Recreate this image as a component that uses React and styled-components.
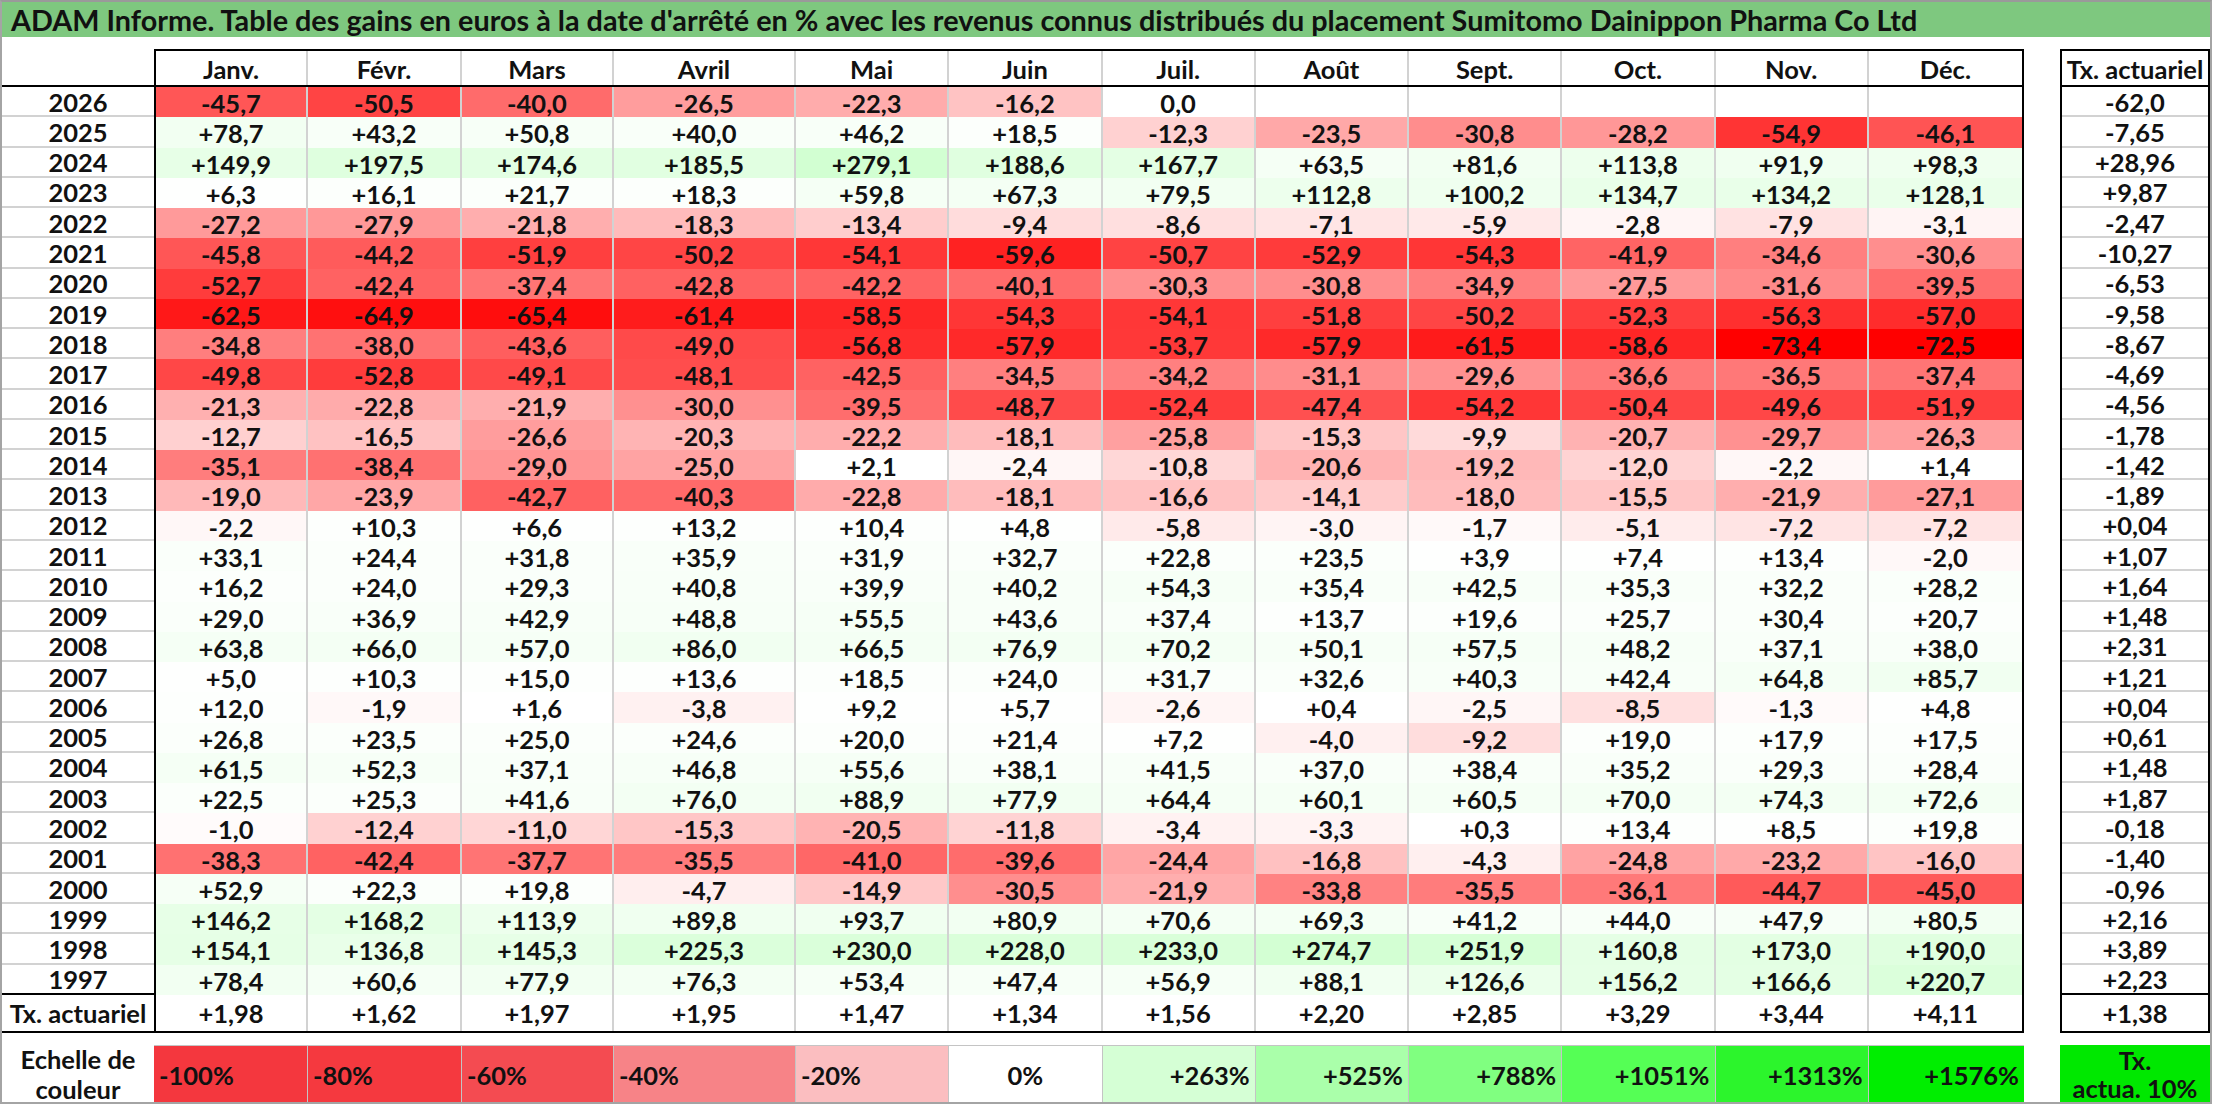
import React from "react";
import styled, { createGlobalStyle } from "styled-components";

const Global = createGlobalStyle`
  html, body { margin: 0; padding: 0; background: #fff; }
  body { font-family: Lato, "Open Sans", "Liberation Sans", sans-serif; color: #111; }
  * { box-sizing: border-box; }
`;

const MONTHS = ["Janv.", "Févr.", "Mars", "Avril", "Mai", "Juin", "Juil.", "Août", "Sept.", "Oct.", "Nov.", "Déc."];
const COLS = "152px 154px 152px 182px repeat(8, 153.25px)";
const LEGEND_COLS = "154px 154px 152px 182px repeat(7, 153.25px) 155.25px";
const ROW_H = 908 / 30;

const DATA = [
  ["2026", ["-45,7", "-50,5", "-40,0", "-26,5", "-22,3", "-16,2", "0,0", "", "", "", "", ""], "-62,0"],
  ["2025", ["+78,7", "+43,2", "+50,8", "+40,0", "+46,2", "+18,5", "-12,3", "-23,5", "-30,8", "-28,2", "-54,9", "-46,1"], "-7,65"],
  ["2024", ["+149,9", "+197,5", "+174,6", "+185,5", "+279,1", "+188,6", "+167,7", "+63,5", "+81,6", "+113,8", "+91,9", "+98,3"], "+28,96"],
  ["2023", ["+6,3", "+16,1", "+21,7", "+18,3", "+59,8", "+67,3", "+79,5", "+112,8", "+100,2", "+134,7", "+134,2", "+128,1"], "+9,87"],
  ["2022", ["-27,2", "-27,9", "-21,8", "-18,3", "-13,4", "-9,4", "-8,6", "-7,1", "-5,9", "-2,8", "-7,9", "-3,1"], "-2,47"],
  ["2021", ["-45,8", "-44,2", "-51,9", "-50,2", "-54,1", "-59,6", "-50,7", "-52,9", "-54,3", "-41,9", "-34,6", "-30,6"], "-10,27"],
  ["2020", ["-52,7", "-42,4", "-37,4", "-42,8", "-42,2", "-40,1", "-30,3", "-30,8", "-34,9", "-27,5", "-31,6", "-39,5"], "-6,53"],
  ["2019", ["-62,5", "-64,9", "-65,4", "-61,4", "-58,5", "-54,3", "-54,1", "-51,8", "-50,2", "-52,3", "-56,3", "-57,0"], "-9,58"],
  ["2018", ["-34,8", "-38,0", "-43,6", "-49,0", "-56,8", "-57,9", "-53,7", "-57,9", "-61,5", "-58,6", "-73,4", "-72,5"], "-8,67"],
  ["2017", ["-49,8", "-52,8", "-49,1", "-48,1", "-42,5", "-34,5", "-34,2", "-31,1", "-29,6", "-36,6", "-36,5", "-37,4"], "-4,69"],
  ["2016", ["-21,3", "-22,8", "-21,9", "-30,0", "-39,5", "-48,7", "-52,4", "-47,4", "-54,2", "-50,4", "-49,6", "-51,9"], "-4,56"],
  ["2015", ["-12,7", "-16,5", "-26,6", "-20,3", "-22,2", "-18,1", "-25,8", "-15,3", "-9,9", "-20,7", "-29,7", "-26,3"], "-1,78"],
  ["2014", ["-35,1", "-38,4", "-29,0", "-25,0", "+2,1", "-2,4", "-10,8", "-20,6", "-19,2", "-12,0", "-2,2", "+1,4"], "-1,42"],
  ["2013", ["-19,0", "-23,9", "-42,7", "-40,3", "-22,8", "-18,1", "-16,6", "-14,1", "-18,0", "-15,5", "-21,9", "-27,1"], "-1,89"],
  ["2012", ["-2,2", "+10,3", "+6,6", "+13,2", "+10,4", "+4,8", "-5,8", "-3,0", "-1,7", "-5,1", "-7,2", "-7,2"], "+0,04"],
  ["2011", ["+33,1", "+24,4", "+31,8", "+35,9", "+31,9", "+32,7", "+22,8", "+23,5", "+3,9", "+7,4", "+13,4", "-2,0"], "+1,07"],
  ["2010", ["+16,2", "+24,0", "+29,3", "+40,8", "+39,9", "+40,2", "+54,3", "+35,4", "+42,5", "+35,3", "+32,2", "+28,2"], "+1,64"],
  ["2009", ["+29,0", "+36,9", "+42,9", "+48,8", "+55,5", "+43,6", "+37,4", "+13,7", "+19,6", "+25,7", "+30,4", "+20,7"], "+1,48"],
  ["2008", ["+63,8", "+66,0", "+57,0", "+86,0", "+66,5", "+76,9", "+70,2", "+50,1", "+57,5", "+48,2", "+37,1", "+38,0"], "+2,31"],
  ["2007", ["+5,0", "+10,3", "+15,0", "+13,6", "+18,5", "+24,0", "+31,7", "+32,6", "+40,3", "+42,4", "+64,8", "+85,7"], "+1,21"],
  ["2006", ["+12,0", "-1,9", "+1,6", "-3,8", "+9,2", "+5,7", "-2,6", "+0,4", "-2,5", "-8,5", "-1,3", "+4,8"], "+0,04"],
  ["2005", ["+26,8", "+23,5", "+25,0", "+24,6", "+20,0", "+21,4", "+7,2", "-4,0", "-9,2", "+19,0", "+17,9", "+17,5"], "+0,61"],
  ["2004", ["+61,5", "+52,3", "+37,1", "+46,8", "+55,6", "+38,1", "+41,5", "+37,0", "+38,4", "+35,2", "+29,3", "+28,4"], "+1,48"],
  ["2003", ["+22,5", "+25,3", "+41,6", "+76,0", "+88,9", "+77,9", "+64,4", "+60,1", "+60,5", "+70,0", "+74,3", "+72,6"], "+1,87"],
  ["2002", ["-1,0", "-12,4", "-11,0", "-15,3", "-20,5", "-11,8", "-3,4", "-3,3", "+0,3", "+13,4", "+8,5", "+19,8"], "-0,18"],
  ["2001", ["-38,3", "-42,4", "-37,7", "-35,5", "-41,0", "-39,6", "-24,4", "-16,8", "-4,3", "-24,8", "-23,2", "-16,0"], "-1,40"],
  ["2000", ["+52,9", "+22,3", "+19,8", "-4,7", "-14,9", "-30,5", "-21,9", "-33,8", "-35,5", "-36,1", "-44,7", "-45,0"], "-0,96"],
  ["1999", ["+146,2", "+168,2", "+113,9", "+89,8", "+93,7", "+80,9", "+70,6", "+69,3", "+41,2", "+44,0", "+47,9", "+80,5"], "+2,16"],
  ["1998", ["+154,1", "+136,8", "+145,3", "+225,3", "+230,0", "+228,0", "+233,0", "+274,7", "+251,9", "+160,8", "+173,0", "+190,0"], "+3,89"],
  ["1997", ["+78,4", "+60,6", "+77,9", "+76,3", "+53,4", "+47,4", "+56,9", "+88,1", "+126,6", "+156,2", "+166,6", "+220,7"], "+2,23"],
];

const TOTALS = ["+1,98", "+1,62", "+1,97", "+1,95", "+1,47", "+1,34", "+1,56", "+2,20", "+2,85", "+3,29", "+3,44", "+4,11"];

const LEGEND = [
  { label: "-100%", bg: "#f4373e", align: "left" },
  { label: "-80%", bg: "#f5393f", align: "left" },
  { label: "-60%", bg: "#f44b51", align: "left" },
  { label: "-40%", bg: "#f78387", align: "left" },
  { label: "-20%", bg: "#fbbec0", align: "left" },
  { label: "0%", bg: "#ffffff", align: "center" },
  { label: "+263%", bg: "#d5ffd5", align: "right" },
  { label: "+525%", bg: "#aaffaa", align: "right" },
  { label: "+788%", bg: "#80ff80", align: "right" },
  { label: "+1051%", bg: "#55ff55", align: "right" },
  { label: "+1313%", bg: "#2cf52c", align: "right" },
  { label: "+1576%", bg: "#00ee00", align: "right" },
];

function cellColor(text) {
  if (!text) return "#ffffff";
  const v = parseFloat(text.replace(",", "."));
  if (v < 0) {
    const g = Math.max(0, Math.round(255 - 3.7 * -v));
    return `rgb(255,${g},${g})`;
  }
  const g = Math.max(0, Math.round(255 - (255 * v) / 1576));
  return `rgb(${g},255,${g})`;
}

const Frame = styled.div`
  width: 2212px;
  height: 1104px;
  border: 2px solid #a4a4a4;
  border-top-color: #9a9a9a;
  display: flex;
  flex-direction: column;
  font-weight: 700;
  font-size: 25.5px;
`;

const TitleBar = styled.div`
  height: 35px;
  background: #7ec87f;
  display: flex;
  align-items: center;
  padding-left: 9px;
  font-size: 28.8px;
  white-space: nowrap;
  color: #111;
`;

const Board = styled.div`
  margin-top: 12px;
  display: flex;
  align-items: flex-start;
`;

const YearColumn = styled.div`
  width: 152px;
  display: flex;
  flex-direction: column;
`;

const YearHead = styled.div`
  height: 38px;
  border-bottom: 2px solid #000;
`;

const YearCell = styled.div`
  height: ${(p) => (p.$tall ? "38px" : `${ROW_H}px`)};
  border-bottom: 2px solid ${(p) => (p.$strong ? "#000" : "#d2d2d2")};
  display: flex;
  align-items: center;
  justify-content: center;
  white-space: nowrap;
  padding-top: 1px;
`;

const MonthTable = styled.div`
  width: 1870px;
  border: 2px solid #000;
  display: flex;
  flex-direction: column;
`;

const Row = styled.div`
  display: grid;
  grid-template-columns: ${COLS};
  height: ${(p) => p.$h}px;
  border-bottom: ${(p) => (p.$line ? `2px solid ${p.$line}` : "none")};
`;

const Cell = styled.div`
  display: flex;
  align-items: center;
  justify-content: center;
  background: ${(p) => p.$bg || "#fff"};
  border-right: 2px solid #d2d2d2;
  padding-top: 1px;
  white-space: nowrap;
  &:last-child { border-right: none; }
`;

const Gap = styled.div`
  width: 36px;
  flex: none;
`;

const TxTable = styled.div`
  width: 150px;
  border: 2px solid #000;
  display: flex;
  flex-direction: column;
`;

const TxCell = styled.div`
  height: ${(p) => p.$h}px;
  border-bottom: ${(p) => (p.$line ? `2px solid ${p.$line}` : "none")};
  display: flex;
  align-items: center;
  justify-content: center;
  white-space: nowrap;
  padding-top: 1px;
`;

const LegendRow = styled.div`
  margin-top: 12px;
  height: 57px;
  display: flex;
  align-items: stretch;
`;

const LegendTitle = styled.div`
  width: 152px;
  display: flex;
  align-items: center;
  justify-content: center;
  text-align: center;
  line-height: 30px;
  padding-top: 2px;
`;

const LegendScale = styled.div`
  width: 1870px;
  display: grid;
  grid-template-columns: ${LEGEND_COLS};
  border-top: 1px solid #c4c4c4;
`;

const Swatch = styled.div`
  background: ${(p) => p.$bg};
  border-right: 1px solid #c4c4c4;
  display: flex;
  align-items: center;
  justify-content: ${(p) => (p.$align === "left" ? "flex-start" : p.$align === "right" ? "flex-end" : "center")};
  padding: 2px 5px 0 5px;
  white-space: nowrap;
  &:last-child { border-right: none; }
`;

const TxSwatch = styled.div`
  width: 150px;
  background: #00e800;
  display: flex;
  align-items: center;
  justify-content: center;
  text-align: center;
  line-height: 28px;
  padding-top: 2px;
`;

export default function App() {
  const last = DATA.length - 1;
  return (
    <>
      <Global />
      <Frame>
        <TitleBar>
          ADAM Informe. Table des gains en euros à la date d'arrêté en % avec les revenus connus distribués du placement Sumitomo Dainippon Pharma Co Ltd
        </TitleBar>
        <Board>
          <YearColumn>
            <YearHead />
            {DATA.map(([year], i) => (
              <YearCell key={year} $strong={i === last}>{year}</YearCell>
            ))}
            <YearCell $tall $strong>Tx. actuariel</YearCell>
          </YearColumn>
          <MonthTable>
            <Row $h={36} $line="#000">
              {MONTHS.map((m) => (
                <Cell key={m}>{m}</Cell>
              ))}
            </Row>
            {DATA.map(([year, vals], i) => (
              <Row key={year} $h={ROW_H} $line={i === last ? "#000" : "#d2d2d2"}>
                {vals.map((v, j) => (
                  <Cell key={j} $bg={cellColor(v)}>{v}</Cell>
                ))}
              </Row>
            ))}
            <Row $h={36}>
              {TOTALS.map((t, j) => (
                <Cell key={j}>{t}</Cell>
              ))}
            </Row>
          </MonthTable>
          <Gap />
          <TxTable>
            <TxCell $h={36} $line="#000">Tx. actuariel</TxCell>
            {DATA.map(([year, , tx], i) => (
              <TxCell key={year} $h={ROW_H} $line={i === last ? "#000" : "#d2d2d2"}>{tx}</TxCell>
            ))}
            <TxCell $h={36}>+1,38</TxCell>
          </TxTable>
        </Board>
        <LegendRow>
          <LegendTitle>
            Echelle de
            <br />
            couleur
          </LegendTitle>
          <LegendScale>
            {LEGEND.map((l) => (
              <Swatch key={l.label} $bg={l.bg} $align={l.align}>{l.label}</Swatch>
            ))}
          </LegendScale>
          <Gap />
          <TxSwatch>
            Tx.
            <br />
            actua. 10%
          </TxSwatch>
        </LegendRow>
      </Frame>
    </>
  );
}
